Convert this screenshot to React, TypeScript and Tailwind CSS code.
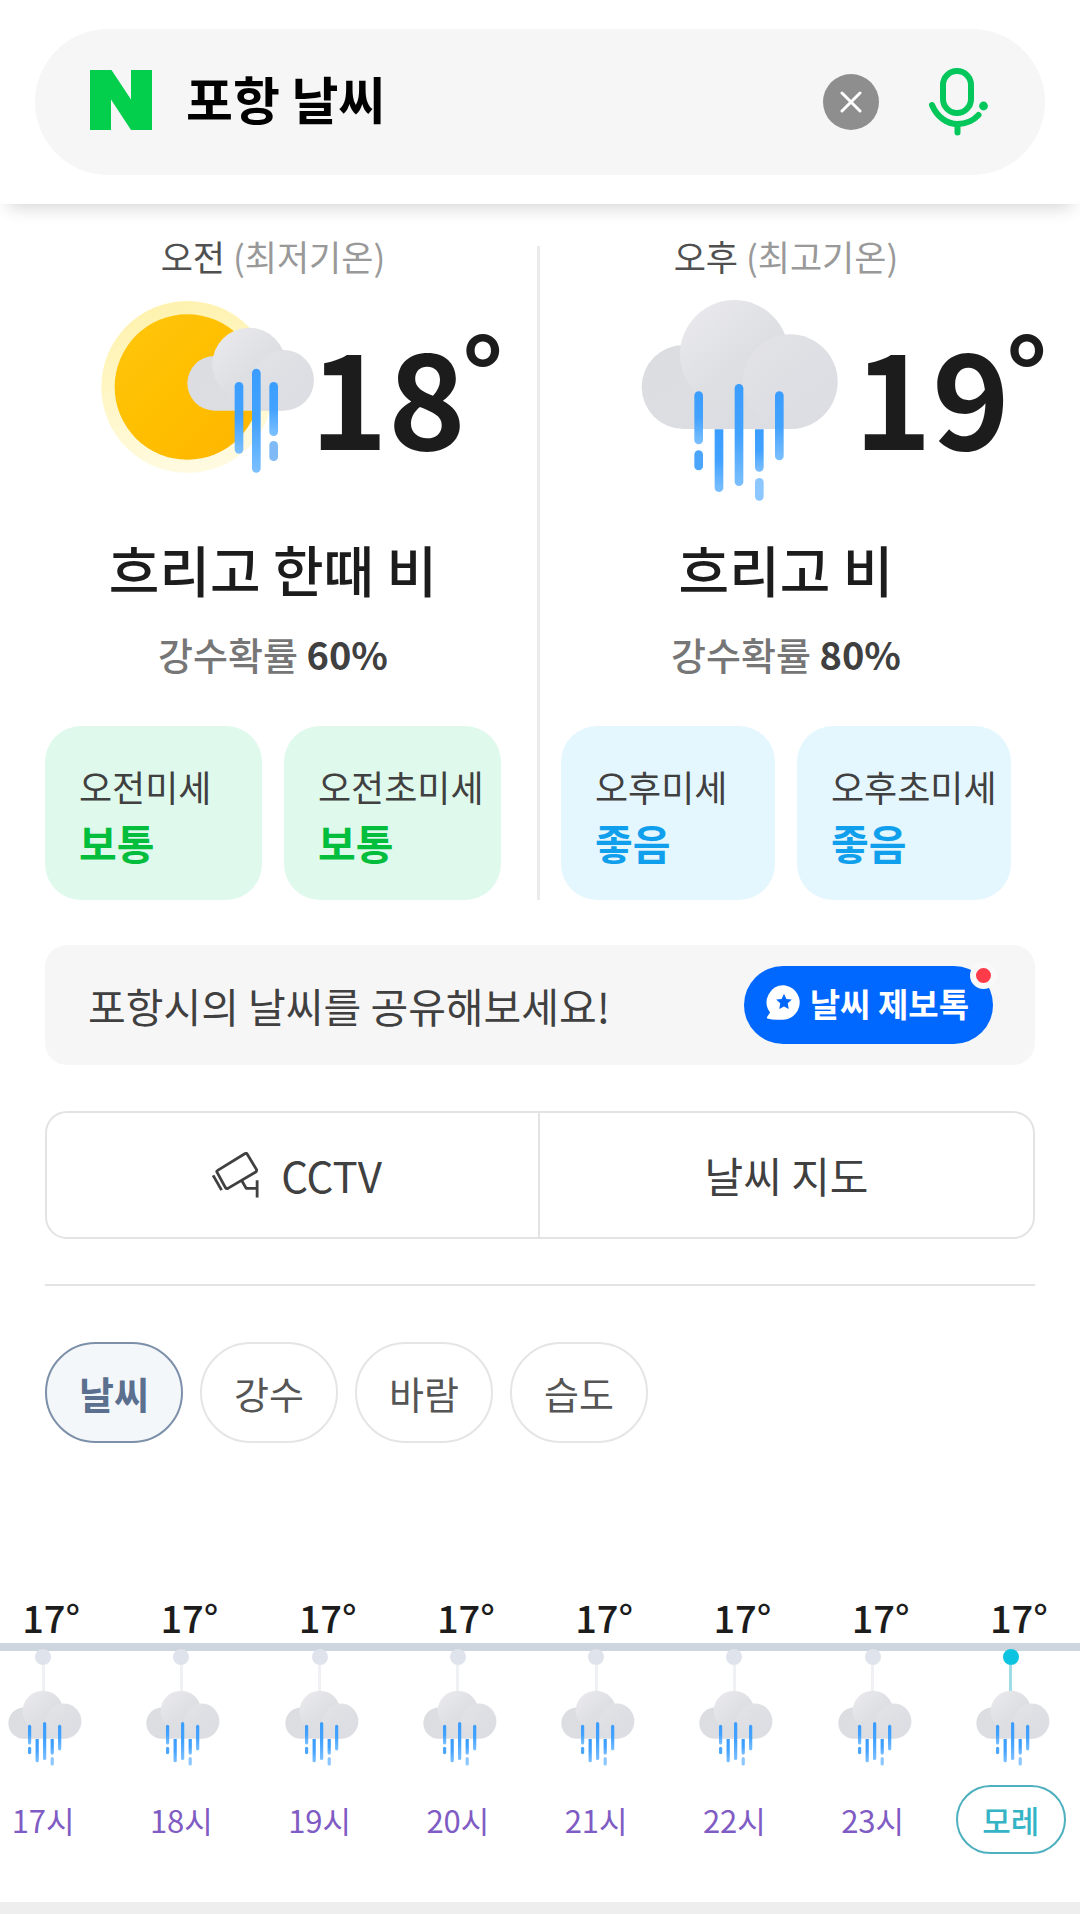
import { useState } from 'react'

type IconProps = {
  className?: string
}

function NaverLogo({ className }: IconProps): React.JSX.Element {
  return (
    <svg viewBox="0 0 62 60" className={className} aria-hidden="true">
      <path d="M0 0H21.500L41 29.500V0H62V60H41L21 29.500V60H0Z" fill="#03cf4d" />
    </svg>
  )
}

function MicIcon({ className }: IconProps): React.JSX.Element {
  return (
    <svg viewBox="0 0 62 70" className={className} aria-hidden="true">
      <g fill="none" stroke="#03c75a" strokeWidth="6" strokeLinecap="round">
        <rect x="16" y="4" width="28" height="42" rx="14" />
        <path d="M5 38C10 50 20 57 30.500 57C39 57 46 54 51.500 48" />
        <path d="M30.500 58V65.500" />
      </g>
      <circle cx="56.500" cy="39" r="4.400" fill="#03c75a" />
    </svg>
  )
}

function CctvIcon({ className }: IconProps): React.JSX.Element {
  return (
    <svg viewBox="617 697 142 136" className={className} aria-hidden="true">
      <g fill="none" stroke="#404040" strokeWidth="8" strokeLinejoin="round">
        <path d="M636 752L714 704Q718 702 720 706L746 749Q748 754 743 757L665 803Q661 805 658 801L634 757Q632 754 636 752Z" />
        <path d="M623 766L647 808" />
        <path d="M705 782L717 803H748" />
        <path d="M748 780V829" />
      </g>
    </svg>
  )
}

function TalkIcon({ className }: IconProps): React.JSX.Element {
  return (
    <svg viewBox="659 193 104 106" className={className} aria-hidden="true">
      <path
        d="M711 194A50 50 0 1 1 702 295Q680 297 662 292Q659 290 662 286L670 274A50 50 0 0 1 711 194Z"
        fill="#fff"
      />
      <path
        d="M711 219L718 234L734 236L722 247L725 264L711 256L697 264L700 247L688 236L704 234Z"
        fill="#0068ff"
      />
    </svg>
  )
}

function CloudDefs({ id }: { id: string }): React.JSX.Element {
  return (
    <defs>
      <linearGradient id={`${id}-side`} x1="0" y1="0" x2="1" y2="1">
        <stop offset="0" stopColor="#dcdde1" />
        <stop offset="1" stopColor="#dcdee3" />
      </linearGradient>
      <linearGradient id={`${id}-top`} x1="0.1" y1="0.1" x2="0.8" y2="0.9">
        <stop offset="0" stopColor="#e9e9ed" />
        <stop offset="0.6" stopColor="#dedfe3" />
        <stop offset="1" stopColor="#dcdde2" />
      </linearGradient>
      <linearGradient id={`${id}-front`} x1="0.1" y1="0.1" x2="0.6" y2="0.7">
        <stop offset="0" stopColor="#e2e2e6" />
        <stop offset="1" stopColor="#dcdee3" />
      </linearGradient>
      <linearGradient id={`${id}-drop`} x1="0" y1="0" x2="0" y2="1">
        <stop offset="0" stopColor="#3a9dff" />
        <stop offset="0.5" stopColor="#42a2ff" />
        <stop offset="1" stopColor="#7cc0ff" />
      </linearGradient>
    </defs>
  )
}

function RainIcon({ id, className }: IconProps & { id: string }): React.JSX.Element {
  const drop = `url(#${id}-drop)`

  return (
    <svg viewBox="30 30 660 660" className={className} role="img" aria-label="비">
      <CloudDefs id={id} />
      <path d="M191 195A126 126 0 0 0 191 447H511V195Z" fill={`url(#${id}-side)`} />
      <circle cx="343" cy="223" r="163" fill={`url(#${id}-top)`} />
      <circle cx="511" cy="305" r="142" fill={`url(#${id}-front)`} />
      <rect x="223" y="334" width="26" height="159" rx="13" fill={drop} />
      <rect x="223" y="511" width="26" height="60" rx="13" fill="#4ba6fb" />
      <path d="M284 448H310V623A13 13 0 0 1 284 623Z" fill={drop} />
      <rect x="344" y="312" width="26" height="306" rx="13" fill={drop} />
      <path d="M405 448H431V562A13 13 0 0 1 405 562Z" fill={drop} />
      <rect x="405" y="594" width="26" height="68" rx="13" fill="#8dc7ff" />
      <rect x="465" y="334" width="26" height="207" rx="13" fill={drop} />
    </svg>
  )
}

function SunRainIcon({ id, className }: IconProps & { id: string }): React.JSX.Element {
  const drop = `url(#${id}-drop)`

  return (
    <svg viewBox="18 30 660 660" className={className} role="img" aria-label="흐리고 한때 비">
      <CloudDefs id={id} />
      <defs>
        <linearGradient id={`${id}-sun`} x1="0" y1="0" x2="1" y2="1">
          <stop offset="0" stopColor="#ffc50c" />
          <stop offset="0.5" stopColor="#ffbf00" />
          <stop offset="1" stopColor="#ffb400" />
        </linearGradient>
        <linearGradient id={`${id}-halo`} x1="0.4" y1="0" x2="0.6" y2="1">
          <stop offset="0" stopColor="#fff2ae" />
          <stop offset="1" stopColor="#fffbe2" />
        </linearGradient>
      </defs>
      <circle cx="322" cy="321" r="258" fill={`url(#${id}-halo)`} />
      <circle cx="322" cy="321" r="218" fill={`url(#${id}-sun)`} />
      <path d="M404 228A82 82 0 0 0 404 392H611V228Z" fill={`url(#${id}-side)`} />
      <circle cx="507" cy="253" r="110" fill={`url(#${id}-top)`} />
      <circle cx="611" cy="301" r="91" fill={`url(#${id}-front)`} />
      <rect x="464" y="306" width="26" height="215" rx="13" fill={drop} />
      <rect x="516" y="266" width="26" height="312" rx="13" fill={drop} />
      <rect x="568" y="306" width="26" height="162" rx="13" fill={drop} />
      <rect x="568" y="483" width="26" height="60" rx="13" fill="#7fbaf6" />
    </svg>
  )
}

type DustCardProps = {
  label: string
  value: string
  good?: boolean
}

function DustCard({ label, value, good }: DustCardProps): React.JSX.Element {
  return (
    <li
      className={`h-[174px] min-w-0 flex-1 rounded-[36px] pt-9 pl-[34px] ${good ? 'bg-[#e5f7fe]' : 'bg-[#dff9ec]'}`}
    >
      <div className="text-[36px] leading-[48px] whitespace-nowrap text-[#404040]">{label}</div>
      <div
        className={`mt-2 text-[41px] leading-[48px] font-bold ${good ? 'text-[#0f9fec]' : 'text-[#02be3c]'}`}
      >
        {value}
      </div>
    </li>
  )
}

type HalfDayProps = {
  period: string
  note: string
  degrees: number
  summary: string
  chance: string
  icon: React.ReactNode
  dust: DustCardProps[]
  className: string
  tempClassName: string
}

function HalfDay({
  period,
  note,
  degrees,
  summary,
  chance,
  icon,
  dust,
  className,
  tempClassName
}: HalfDayProps): React.JSX.Element {
  return (
    <section className={`min-w-0 text-center ${className}`}>
      <h2 className="-mt-2.5 text-[35px] leading-10 text-[#505050]">
        {period} <span className="text-[#999]">({note})</span>
      </h2>
      <div className={`mt-3.5 flex h-[220px] items-center ${tempClassName}`}>
        {icon}
        <span className="ml-1 pb-3.5 text-[132px] leading-none font-bold text-[#1c1c1c]">{degrees}</span>
        <span className="mt-7 -ml-1 self-start text-[104px] leading-none font-bold text-[#1c1c1c]">°</span>
      </div>
      <p className="mt-7 text-[55px] leading-[60px] font-medium whitespace-nowrap text-[#1c1c1c]">
        {summary}
      </p>
      <p className="mt-8 text-[38px] leading-[48px] font-medium text-[#767676]">
        강수확률 <strong className="font-bold text-[#404040]">{chance}</strong>
      </p>
      <ul className="mt-12 flex gap-[22px] text-left">
        {dust.map((item) => (
          <DustCard key={item.label} {...item} />
        ))}
      </ul>
    </section>
  )
}

const tabs = ['날씨', '강수', '바람', '습도']

const hours = ['17시', '18시', '19시', '20시', '21시', '22시', '23시', '모레']

function App(): React.JSX.Element {
  const [query, setQuery] = useState('포항 날씨')
  const [tab, setTab] = useState('날씨')

  return (
    <div className="overflow-hidden bg-white font-['Noto_Sans_CJK_KR',sans-serif]">
      <header className="bg-white px-[35px] py-[29px] shadow-[0_12px_16px_-8px_rgba(0,0,0,0.16)]">
        <form
          className="flex h-[146px] items-center rounded-full bg-[#f6f6f6] pr-14 pl-[55px]"
          onSubmit={(event) => event.preventDefault()}
        >
          <NaverLogo className="mb-1 h-[60px] w-[62px] shrink-0" />
          <input
            type="text"
            aria-label="검색어"
            value={query}
            onChange={(event) => setQuery(event.target.value)}
            className="ml-[34px] min-w-0 flex-1 bg-transparent pb-2 text-[51px] leading-[60px] font-bold text-black outline-none"
          />
          <button
            type="button"
            aria-label="지우기"
            onClick={() => setQuery('')}
            className="flex size-14 items-center justify-center rounded-full bg-[#8e8e8e]"
          >
            <svg viewBox="0 0 22 22" className="size-[22px]" aria-hidden="true">
              <path d="M2 2L20 20M20 2L2 20" stroke="#fff" strokeWidth="3" strokeLinecap="round" />
            </svg>
          </button>
          <button type="button" aria-label="음성 검색" className="ml-12">
            <MicIcon className="h-[70px] w-[62px]" />
          </button>
        </form>
      </header>

      <main>
        <div className="px-[45px] pt-[42px]">
          <div className="grid grid-cols-2">
            <HalfDay
              period="오전"
              note="최저기온"
              degrees={18}
              summary="흐리고 한때 비"
              chance="60%"
              icon={<SunRainIcon id="am" className="size-[220px] shrink-0 overflow-visible" />}
              dust={[
                { label: '오전미세', value: '보통' },
                { label: '오전초미세', value: '보통' }
              ]}
              className="border-r-3 border-[#ebebeb] pr-9"
              tempClassName="pl-[41px]"
            />
            <HalfDay
              period="오후"
              note="최고기온"
              degrees={19}
              summary="흐리고 비"
              chance="80%"
              icon={<RainIcon id="pm" className="size-[220px] shrink-0" />}
              dust={[
                { label: '오후미세', value: '좋음', good: true },
                { label: '오후초미세', value: '좋음', good: true }
              ]}
              className="pr-6 pl-[21px]"
              tempClassName="pl-[69px]"
            />
          </div>

          <div className="mt-[45px] flex h-[120px] items-center justify-between rounded-[22px] bg-[#f6f6f6] pr-[42px] pl-[43px]">
            <p className="text-[41px] leading-[48px] text-[#404040]">포항시의 날씨를 공유해보세요!</p>
            <button
              type="button"
              className="relative flex h-[78px] items-center gap-2 rounded-full bg-[#0068ff] pr-6 pb-1 pl-[22px] text-[33px] leading-10 font-bold text-white"
            >
              <TalkIcon className="size-9" />
              날씨 제보톡
              <span className="absolute -top-1 -right-1 size-[27px] rounded-full border-6 border-[#f9f9f9] bg-[#ff3b4a]" />
            </button>
          </div>

          <div className="mt-[46px] grid h-32 grid-cols-2 rounded-[22px] border-2 border-[#e3e3e3] text-[42px] leading-[48px] text-[#404040]">
            <a
              href="#cctv"
              className="flex items-center justify-center gap-5 border-r-2 border-[#e3e3e3] pl-2"
            >
              <CctvIcon className="h-[48px] w-[50px]" />
              CCTV
            </a>
            <a href="#map" className="flex items-center justify-center">
              날씨 지도
            </a>
          </div>

          <hr className="mt-[45px] border-t-2 border-[#e3e3e3]" />

          <div role="tablist" className="mt-14 flex gap-[17px]">
            {tabs.map((name) => (
              <button
                key={name}
                type="button"
                role="tab"
                aria-selected={name === tab}
                onClick={() => setTab(name)}
                className={`h-[101px] w-[138px] rounded-full border-2 text-[38px] leading-[48px] ${
                  name === tab
                    ? 'border-[#7d90a9] bg-[#f4f7fa] font-bold text-[#5b6f8f]'
                    : 'border-[#e5e5e5] text-[#555]'
                }`}
              >
                {name}
              </button>
            ))}
          </div>
        </div>

        <ol className="mt-[150px] -ml-[26px] grid grid-cols-8 pb-12">
          {hours.map((hour) => {
            const isDay = hour === '모레'

            return (
              <li key={hour} className="flex flex-col items-center">
                <span className="pb-0.5 pl-4 text-[38px] leading-[48px] font-medium text-[#1c1c1c]">17°</span>
                <span className="h-2 w-full bg-[#cdd5df]" />
                <span
                  className={`relative -mt-0.5 size-4 rounded-full ${isDay ? 'bg-[#0cc3e0]' : 'bg-[#dfe3eb]'}`}
                />
                <span className={`h-[26px] w-[3px] ${isDay ? 'bg-[#9fdde6]' : 'bg-[#eff1f5]'}`} />
                <RainIcon id={`rain-${hour}`} className="-mt-1 ml-1 size-[82px]" />
                <span className="mt-4 flex h-[69px] items-center">
                  {isDay ? (
                    <a
                      href="#day-after-tomorrow"
                      className="flex h-full w-[110px] items-center justify-center rounded-full border-2 border-[#4fb0bf] text-[31px] leading-10 font-medium text-[#35b4c6]"
                    >
                      {hour}
                    </a>
                  ) : (
                    <span className="text-[31px] leading-10 text-[#7f5cc4]">{hour}</span>
                  )}
                </span>
              </li>
            )
          })}
        </ol>
      </main>

      <div className="h-3 bg-[#eee]" />
    </div>
  )
}

export default App
